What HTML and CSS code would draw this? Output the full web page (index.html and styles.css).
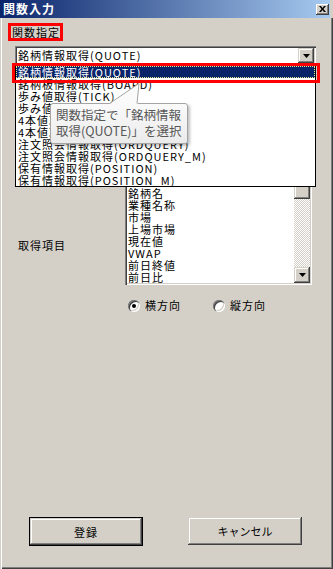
FILE: index.html
```html
<!DOCTYPE html>
<html lang="ja">
<head>
<meta charset="utf-8">
<title>関数入力</title>
<link rel="stylesheet" href="styles.css">
</head>
<body>
<div class="window">
  <div class="titlebar">
    <span class="title">関数入力</span>
    <span class="close"><svg width="7" height="6" viewBox="0 0 7 6"><path d="M0 0h2l1.5 2 1.5-2h2L4.5 3 7 6H5L3.5 4 2 6H0l2.5-3z" fill="#000"/></svg></span>
  </div>
  <div class="body">
    <div class="fn-label">関数指定</div>
    <div class="combo">
      <span class="combo-text">銘柄情報取得(QUOTE)</span>
      <span class="btn3d combo-btn"><svg width="7" height="4" viewBox="0 0 7 4"><path d="M0 0h7L3.5 4z" fill="#000"/></svg></span>
    </div>
    <div class="items-row">
      <div class="items-label">取得項目</div>
      <div class="listbox">
        <div class="lb-items">
          <div>銘柄コード</div>
          <div>市場コード</div>
          <div>銘柄名</div>
          <div>業種名称</div>
          <div>市場</div>
          <div>上場市場</div>
          <div>現在値</div>
          <div>VWAP</div>
          <div>前日終値</div>
          <div>前日比</div>
        </div>
        <div class="scrollbar">
          <div class="btn3d sb-btn"><svg width="7" height="4" viewBox="0 0 7 4"><path d="M0 4h7L3.5 0z" fill="#000"/></svg></div>
          <div class="btn3d sb-thumb"></div>
          <div class="sb-track"></div>
          <div class="btn3d sb-btn"><svg width="7" height="4" viewBox="0 0 7 4"><path d="M0 0h7L3.5 4z" fill="#000"/></svg></div>
        </div>
      </div>
    </div>
    <div class="radios">
      <label class="radio"><span class="radio-circle checked"></span>横方向</label>
      <label class="radio"><span class="radio-circle"></span>縦方向</label>
    </div>
    <div class="buttons">
      <div class="btn3d button default">登録</div>
      <div class="btn3d button">キャンセル</div>
    </div>

    <div class="dropdown">
      <div class="dd-item sel">銘柄情報取得(QUOTE)</div>
      <div class="dd-item">銘柄板情報取得(BOARD)</div>
      <div class="dd-item">歩み値取得(TICK)</div>
      <div class="dd-item">歩み値取得(TICK_M)</div>
      <div class="dd-item">4本値取得(OHLC)</div>
      <div class="dd-item">4本値取得(OHLC_M)</div>
      <div class="dd-item">注文照会情報取得(ORDQUERY)</div>
      <div class="dd-item">注文照会情報取得(ORDQUERY_M)</div>
      <div class="dd-item">保有情報取得(POSITION)</div>
      <div class="dd-item">保有情報取得(POSITION_M)</div>
    </div>
    <div class="hl-box"></div>
    <div class="bubble">関数指定で「銘柄情報<br>取得(QUOTE)」を選択</div>
    <svg class="tail" width="40" height="26" viewBox="0 0 40 26">
      <path d="M4 24.5 L34 3 L32.5 24.5 Z" fill="#fafafa"/>
      <polyline points="4.5,23.5 34,3.5 32,23.5" fill="none" stroke="#a4a4a4" stroke-width="1"/>
    </svg>
  </div>
</div>
</body>
</html>
```
FILE: styles.css
```css
* { box-sizing: border-box; }
html, body { margin: 0; padding: 0; }
body {
  background: #d4d0c8;
  font-family: "Noto Sans CJK JP", "Liberation Sans", sans-serif;
  font-size: 11px;
  letter-spacing: 1px;
  color: #000;
}
.window {
  width: 333px;
  height: 569px;
  display: flex;
  flex-direction: column;
  overflow: hidden;
}
.titlebar {
  height: 18px;
  margin-right: 3px;
  background: linear-gradient(to right, #0a246a, #a6caf0);
  display: flex;
  align-items: center;
  justify-content: space-between;
  padding: 0 1px 0 3px;
}
.title {
  color: #fff;
  font-weight: bold;
  font-size: 12px;
  line-height: 18px;
  letter-spacing: 1px;
}
.close {
  width: 13px;
  height: 11px;
  background: #d4d0c8;
  box-shadow: inset -1px -1px #404040, inset 1px 1px #fff, inset -2px -2px #808080;
  display: flex;
  align-items: center;
  justify-content: center;
}
.close svg { display: block; }
.body {
  flex: 1;
  position: relative;
  display: flex;
  flex-direction: column;
  align-items: flex-start;
  box-shadow: inset 1px 0 #d4d0c8, inset 2px 0 #ffffff, inset -1px -1px #404040, inset -2px -2px #808080;
}
.btn3d {
  background: #d4d0c8;
  box-shadow: inset -1px -1px #404040, inset 1px 1px #d4d0c8, inset -2px -2px #808080, inset 2px 2px #fff;
  display: flex;
  align-items: center;
  justify-content: center;
}
.btn3d svg { display: block; }
.fn-label {
  margin: 5px 0 0 8px;
  border: 3px solid #f00;
  height: 18px;
  line-height: 12px;
  padding-left: 1px;
}
.combo {
  margin: 5px 0 0 15px;
  width: 301px;
  height: 19px;
  background: #fff;
  padding: 2px;
  display: flex;
  box-shadow: inset 1px 1px #808080, inset 2px 2px #404040, inset -1px -1px #fff, inset -2px -2px #d4d0c8;
}
.combo-text {
  flex: 1;
  padding-left: 1px;
  line-height: 15px;
}
.combo-btn {
  width: 16px;
  height: 15px;
}
.items-row {
  margin-top: 96px;
  display: flex;
  align-items: flex-start;
}
.items-label {
  margin: 78px 0 0 18px;
  width: 107px;
  line-height: 12px;
}
.listbox {
  width: 187px;
  height: 124px;
  padding: 2px;
  background: #fff;
  display: flex;
  box-shadow: inset 1px 1px #808080, inset 2px 2px #404040, inset -1px -1px #fff, inset -2px -2px #d4d0c8;
}
.lb-items {
  flex: 1;
  padding-left: 1px;
  overflow: hidden;
}
.lb-items div {
  height: 12px;
  line-height: 12px;
  white-space: nowrap;
}
.scrollbar {
  width: 16px;
  display: flex;
  flex-direction: column;
}
.sb-btn { height: 16px; }
.sb-thumb { height: 20px; }
.sb-track {
  flex: 1;
  background: repeating-conic-gradient(#ffffff 0 25%, #d4d0c8 0 50%) 0 0 / 2px 2px;
}
.radios {
  margin: 14px 0 0 128px;
  display: flex;
}
.radio {
  display: flex;
  align-items: center;
  gap: 5px;
  width: 85px;
  line-height: 13px;
}
.radio-circle {
  width: 12px;
  height: 12px;
  border-radius: 50%;
  background: #fff;
  position: relative;
  box-shadow: inset 1px 1px #808080, inset 2px 2px #404040, inset -1px -1px #fff, inset -2px -2px #d4d0c8;
}
.radio-circle.checked::after {
  content: "";
  position: absolute;
  left: 4px;
  top: 4px;
  width: 4px;
  height: 4px;
  border-radius: 50%;
  background: #000;
}
.buttons {
  margin-top: auto;
  margin-bottom: 23px;
  margin-left: 29px;
  display: flex;
  align-items: flex-start;
  gap: 45px;
}
.button {
  width: 114px;
  height: 28px;
  letter-spacing: 0;
}
.button.default {
  height: 29px;
  border: 1px solid #000;
  letter-spacing: 1px;
}
.dropdown {
  position: absolute;
  left: 15px;
  top: 47px;
  width: 301px;
  height: 122px;
  border: 1px solid #000;
  background: #fff;
}
.dd-item {
  height: 12px;
  line-height: 12px;
  padding-left: 2px;
  white-space: nowrap;
}
.dd-item.sel {
  background: #0a246a;
  color: #fff;
  outline: 1px dotted #e8e890;
  outline-offset: -1px;
}
.hl-box {
  position: absolute;
  left: 12px;
  top: 45px;
  width: 308px;
  height: 20px;
  border: 3px solid #f00;
}
.bubble {
  position: absolute;
  left: 50px;
  top: 85px;
  width: 138px;
  height: 41px;
  border: 1px solid #a4a4a4;
  border-radius: 3px;
  background: linear-gradient(#fafafa, #ebebeb);
  box-shadow: 2px 2px 3px rgba(0, 0, 0, 0.25);
  color: #575757;
  font-size: 12.5px;
  letter-spacing: 0;
  line-height: 16px;
  padding: 3px 0 0 5px;
  white-space: nowrap;
}
.tail {
  position: absolute;
  left: 105px;
  top: 62px;
}
```
